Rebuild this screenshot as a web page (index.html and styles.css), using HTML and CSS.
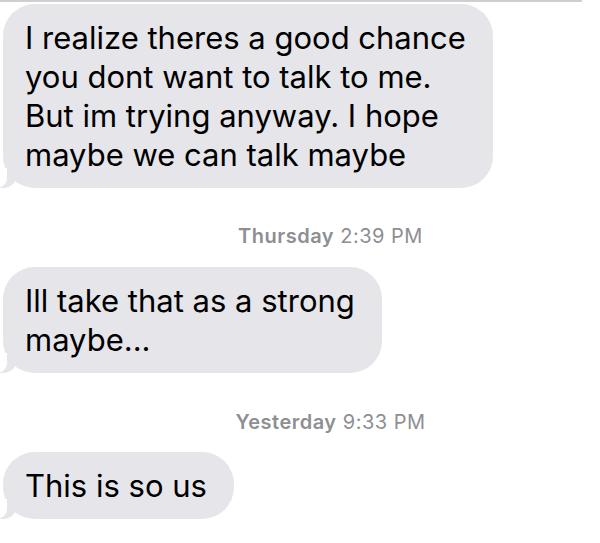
FILE: index.html
```html
<!DOCTYPE html>
<html lang="en">
<head>
    <meta charset="UTF-8">
    <meta name="viewport" content="width=device-width, initial-scale=1.0">
    <title>Messages</title>
    <link rel="stylesheet" href="styles.css">
</head>
<body>
    <div class="thread">
        <div class="bubble">I realize theres a good chance<br>you dont want to talk to me.<br>But im trying anyway. I hope<br>maybe we can talk maybe</div>

        <div class="stamp"><b>Thursday</b> 2:39 PM</div>
        <div class="bubble">Ill take that as a strong<br>maybe...</div>

        <div class="stamp stamp-second"><b>Yesterday</b> 9:33 PM</div>
        <div class="bubble">This is so us</div>
    </div>
</body>
</html>
```

FILE: styles.css
```css
body {
    margin: 0;
    background-color: #fff;
    font-family: Inter, "Liberation Sans", sans-serif;
}

.thread {
    display: flex;
    flex-direction: column;
    align-items: flex-start;
    padding: 2px 0 0 3px;
    border-top: 2px solid #cfcfd2;
    width: 579px;
}

.bubble {
    position: relative;
    background-color: #e5e5ea;
    color: #000;
    font-size: 31px;
    line-height: 39px;
    padding: 14px 27px 14px 22px;
    border-radius: 32px;
}

/* little tail at the bottom left */
.bubble::before {
    content: "";
    position: absolute;
    bottom: 0;
    left: -6px;
    width: 20px;
    height: 18px;
    background-color: #e5e5ea;
    border-bottom-right-radius: 14px;
}

.bubble::after {
    content: "";
    position: absolute;
    bottom: 0;
    left: -10px;
    width: 14px;
    height: 20px;
    background-color: #fff;
    border-bottom-right-radius: 10px;
}

.stamp {
    align-self: stretch;
    text-align: center;
    padding-left: 76px;
    margin: 36px 0 19px;
    font-size: 20px;
    line-height: 24px;
    letter-spacing: 0.5px;
    color: #8e8e93;
}

.stamp b {
    font-weight: 600;
}

.stamp-second {
    margin-top: 37px;
    margin-bottom: 18px;
}
```
